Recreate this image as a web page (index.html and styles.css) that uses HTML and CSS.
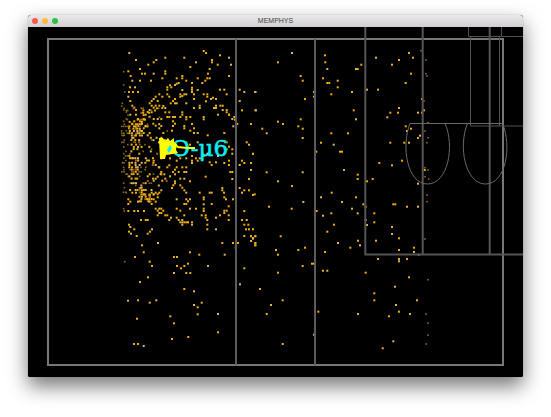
FILE: index.html
```html
<!DOCTYPE html>
<html lang="en">
<head>
<meta charset="utf-8">
<title>MEMPHYS</title>
<link rel="stylesheet" href="styles.css">
</head>
<body>
<main class="window">
  <header class="titlebar">
    <div class="controls">
      <button class="control close" type="button" aria-label="Close"></button>
      <button class="control minimize" type="button" aria-label="Minimize"></button>
      <button class="control zoom" type="button" aria-label="Zoom"></button>
    </div>
    <h1 class="title">MEMPHYS</h1>
  </header>
  <svg class="scene" viewBox="28 27 495 350" role="img" aria-label="Detector event display">
    <g class="hits" id="hits"></g>
    <g class="frame">
      <path class="outer" d="M48 39H503V365H48Z"/>
      <path class="thick" d="M236 39V365M315 39V365"/>
      <path class="inset" d="M365.300 27V254.500H523M422.700 27V254.500M489.700 27V254.500"/>
      <path class="thin" d="M468.500 27V36.500H523M501.500 27V36.500M470.500 36.500V126H523M499.500 36.500V126"/>
      <path class="curve" d="M410 123.500H502M410 123.500C401 146 407 184 427.500 184C448 184 455 146 445 123.500M467.500 123.500C458 146 465 184 485.500 184C506 184 512 146 502.500 123.500"/>
    </g>
    <g class="labels">
      <text class="label particle" x="171" y="156">O-μ6</text>
      <text class="label gamma" x="158" y="154">μ</text>
      <path class="flare" d="M159 138H163L165 141L168 138L170 141L174 138V142L177 144L176 150L178 153L173 154L166 155L165 159H160Z"/>
      <path class="track" d="M172 142L178 147L187 148H195"/>
      <path class="spot" d="M170 145L172 148L169 153L167 150Z"/>
    </g>
  </svg>
</main>
<script src="hits.js"></script>
</body>
</html>
```

FILE: styles.css
```css
body {
  margin: 0;
  background: #fff;
  font-family: "Liberation Sans", Arial, sans-serif;
}

.window {
  margin: 15px 28px 40px;
  overflow: hidden;
  border-radius: 3px 3px 2px 2px;
  background: #000;
  box-shadow: 0 0 1px #888, 0 9px 20px rgba(0, 0, 0, 0.55);
}

.titlebar {
  display: grid;
  grid-template-columns: 1fr auto 1fr;
  align-items: center;
  height: 12px;
  background: linear-gradient(#ebe9eb, #d0ced0);
}

.controls {
  display: flex;
  gap: 4px;
  padding-left: 4px;
}

.control {
  width: 6px;
  height: 6px;
  padding: 0;
  border: 0;
  border-radius: 50%;
}

.close { background: #fc5753; }
.minimize { background: #fdbc40; }
.zoom { background: #29c440; }

.title {
  margin: 0;
  color: #444;
  font-family: "Liberation Sans", Arial, sans-serif;
  font-size: 7px;
  font-weight: 400;
  line-height: 12px;
}

.scene {
  display: block;
  width: 100%;
  background: #000;
}

.frame path { fill: none; }
.frame .outer { stroke: #777; stroke-width: 2; }
.frame .thick { stroke: #5c5c5c; stroke-width: 2; }
.frame .inset { stroke: #555; stroke-width: 2; }
.frame .thin { stroke: #505050; stroke-width: 1; }
.frame .curve { stroke: #6a6a6a; stroke-width: 1; }

.gold { fill: #ecae08; }
.pale { fill: #deb35a; }
.dim { fill: #8c6a18; }
.red { fill: #b3532c; }

.label {
  font-family: "DejaVu Serif", serif;
  font-size: 23px;
}

.gamma { fill: #ff0; }
.particle { fill: #00f0fa; stroke: #00f0fa; stroke-width: 0.5; }
.track { fill: none; stroke: #ff0; stroke-width: 2; }
.flare { fill: #ff0; }
.spot { fill: #00f0fa; }
```

FILE: hits.js
```js
// Each sector lists x,y pairs in thirds of a scene unit from its origin.
const sectors = [
  { x: 110, y: 40, hits: "58,39 78,60 115,74 131,67 139,60 166,53 223,53 241,81 258,67 281,33 288,39 330,46 357,53 306,60 306,67 323,74 363,74 299,87 294,101 357,108 299,115 263,115 286,122 292,115 277,129 41,95 55,94 62,108 67,122 90,87 96,101 105,101 131,101 90,122 123,122 166,94 166,101 157,115 41,135 60,142 75,142 57,156 69,156 84,156 44,156 200,115 206,129 195,135 200,131 217,108 217,115 229,122 217,150 211,163 223,163 217,168 229,163 246,129 246,143 246,149 246,156 252,163 263,150 180,136 172,142 184,142 172,149 172,163 178,170 148,163 137,170 157,170 131,177 143,183 125,183 119,190 125,197 131,203 137,197 148,197 119,210 113,216 125,217 107,224 119,230 101,237 90,244 96,251 84,258 78,265 90,272 78,286 67,197 73,203 78,210 37,190 55,170 61,183 41,210 49,216 61,224 78,224 84,237 73,244 67,251 49,237 41,244 57,265 49,272 43,286 195,177 200,190 195,190 189,183 182,190 211,170 229,190 252,177 252,204 269,197 269,204 281,163 292,163 292,170 303,177 309,173 318,177 330,149 343,149 350,163 288,184 318,197 312,204 318,204 331,197 338,197 338,210 350,210 350,217 357,224 367,237 373,231 375,239 382,252 370,259 357,224 324,224 281,231 281,238 241,231 229,231 229,238 217,217 217,224 211,231 195,231 189,231 178,217 172,231 178,231 166,204 166,217 157,204 154,237 143,237 131,237 189,244 195,251 189,258 223,258 246,252 252,265 252,279 241,272 223,265 186,272 263,279 293,286 343,279 389,149 403,156 436,156 389,183 396,211 437,211 423,252 130,251 137,257 148,265 154,258 160,279 119,279 113,286 101,279 101,265 107,258" },
  { x: 110, y: 140, hits: "229,55 246,62 263,62 269,55 246,69 299,67 305,75 318,67 343,69 229,82 217,82 223,96 229,96 200,82 195,89 189,96 195,103 206,96 154,55 131,62 137,75 148,82 154,96 154,103 163,103 180,109 166,116 157,122 131,122 172,82 178,76 143,110 137,116 119,103 113,109 195,124 195,130 190,136 186,144 211,116 223,116 211,136 217,143 223,151 229,158 240,124 287,110 337,144 337,151 342,158 361,96 367,96 367,117 357,75 357,62 367,28 367,41 357,20 350,28 343,41 389,75 396,62 403,69 429,41 417,14 410,7 417,117 403,151 396,158 389,144 417,151 434,163 299,158 305,158 281,172 281,178 281,193 305,192 269,158 240,178 229,178 234,184 223,192 229,192 200,178 200,206 211,212 223,226 240,206 258,206 281,206 343,172 348,178 369,178 356,199 350,212 343,212 343,219 356,226 330,226 281,213 287,226 287,233 275,226 318,233 292,240 292,254 292,268 318,268 356,240 137,206 143,212 148,206 154,206 160,212 154,219 148,219 166,226 172,226 143,226 183,233 178,240 200,233 211,247 217,240 217,247 223,247 234,247 217,254 246,254 246,247 229,247 206,240 113,240 107,240 93,240 126,268 120,275 113,281 80,288 61,261 57,254 73,268 57,275 63,281 43,213 41,206 55,213 73,213 84,213 61,185 55,178 84,185 78,158 67,158 49,158 55,192 102,213 403,213 396,240 410,240 415,254 403,254 408,268 417,268 429,268 403,288 423,288 429,294 436,288 125,158 119,165 131,163 137,158 143,163 148,158 119,170 125,177 119,185 125,192 113,178 107,170 101,163 96,151 90,144 137,185 143,172 131,178 154,151 180,55 186,7 200,62 206,48 211,55 229,7 240,14 263,7 281,48 292,41 258,55 324,48 246,48 350,7 337,3" },
  { x: 110, y: 240, hits: "144,9 96,16 101,37 75,51 44,65 119,65 126,78 192,51 201,51 240,37 268,44 337,9 344,44 369,9 384,9 377,23 423,3 436,9 436,16 201,78 192,99 213,85 223,78 234,71 229,99 241,99 294,78 403,85 390,133 114,112 90,126 223,147 252,154 54,182 84,181 119,188 139,181 81,236 181,229 192,250 252,195 263,202 263,223 275,188 324,222 324,277 235,291 186,297 101,318 84,312 72,312" },
  { x: 250, y: 40, hits: "126,39 84,67 152,108 158,122 16,156 192,156 192,170 165,177 17,211 84,245 99,252 37,266 50,280 145,259 152,238 158,266 158,294 3,252 9,342 3,369 3,390 50,397 84,424 126,438 158,397 9,465 225,46 226,67 232,87 219,115 232,129 238,129 263,122 263,142 244,163 306,156 318,87 323,87 334,74 311,211 318,238 294,280 244,280 213,308 251,314 199,335 270,335 276,335 282,390 323,404 323,417 245,458 213,472 318,472 351,424 368,417 378,53 426,74 447,60 477,39 489,53 483,101 467,129 384,149 351,149 447,204 421,218 444,218 412,232 467,259 483,266 471,273 504,218 516,218 516,177 522,211 510,287 504,294 421,308 463,308 477,308 456,362 388,369 426,376 504,431 524,390" },
  { x: 250, y: 200, hits: "160,6 57,20 125,26 200,33 219,47 244,40 252,74 232,95 264,129 225,156 276,6 306,26 323,40 340,13 347,20 347,60 351,75 373,40 373,67 324,122 330,136 301,143 378,122 426,81 426,102 430,13 436,13 471,20 504,20 447,115 447,150 492,143 492,156 506,164 384,177 447,177 447,184 471,177 347,218 477,232 435,260 373,280 373,301 501,301 438,315 447,335 417,349 480,342 430,424 398,445 324,342 205,335 192,404 186,191 192,191 219,212 232,212 158,198 165,143 145,150 78,150 84,164 92,109 3,109 9,116 16,109 16,129 16,136 3,123 84,218 30,267 98,301 63,315 50,342 98,432" },
  { x: 350, y: 10, tone: "dim", hits: "228,150 228,191 231,198 222,273 234,338 225,363 234,383 231,398 225,473 234,480 225,500 236,507 231,555 231,575 225,687 213,122 234,809 228,912 234,939 234,975 228,1002" }
];

const layer = document.getElementById("hits");

function addHit(x, y, tone) {
  const dot = document.createElementNS("http://www.w3.org/2000/svg", "rect");
  const size = tone === "dim" ? 1.6 : 2;
  dot.setAttribute("x", (x - size / 2).toFixed(1));
  dot.setAttribute("y", (y - size / 2).toFixed(1));
  dot.setAttribute("width", size);
  dot.setAttribute("height", size);
  dot.setAttribute("class", tone);
  layer.appendChild(dot);
}

for (const sector of sectors) {
  sector.hits.split(" ").forEach((pair, i) => {
    const [dx, dy] = pair.split(",").map(Number);
    const x = sector.x + dx / 3;
    const y = sector.y + dy / 3;
    addHit(x, y, sector.tone || (x < 128 ? "dim" : i % 4 === 0 ? "pale" : "gold"));
  });
}

// Repeatable noise for the dense near wall of the ring.
let seed = 977;
function random() {
  seed = (seed * 16807) % 2147483647;
  return seed / 2147483647;
}

for (let y = 106; y < 202; y += 2.27) {
  for (let x = 122; x < 168; x += 1.95) {
    const radius = Math.hypot((x - 193) / 59, (y - 157) / 68);
    let density = x < 136 ? 0.25 : 0.14;
    if (radius > 0.92 && radius < 1.09) density = 0.5;
    if (y > 186 && radius > 1.09) density = 0.05;
    if (y < 118 && radius > 1.09) density = 0.1;
    if (y < 125 && x > 145) density *= 0.4;
    if (random() < density) {
      const pick = random();
      const shift = random() - 0.5;
      addHit(x + shift, y, x < 129 ? "dim" : pick < 0.08 ? "red" : pick < 0.3 ? "dim" : pick < 0.6 ? "pale" : "gold");
    }
  }
}
```
